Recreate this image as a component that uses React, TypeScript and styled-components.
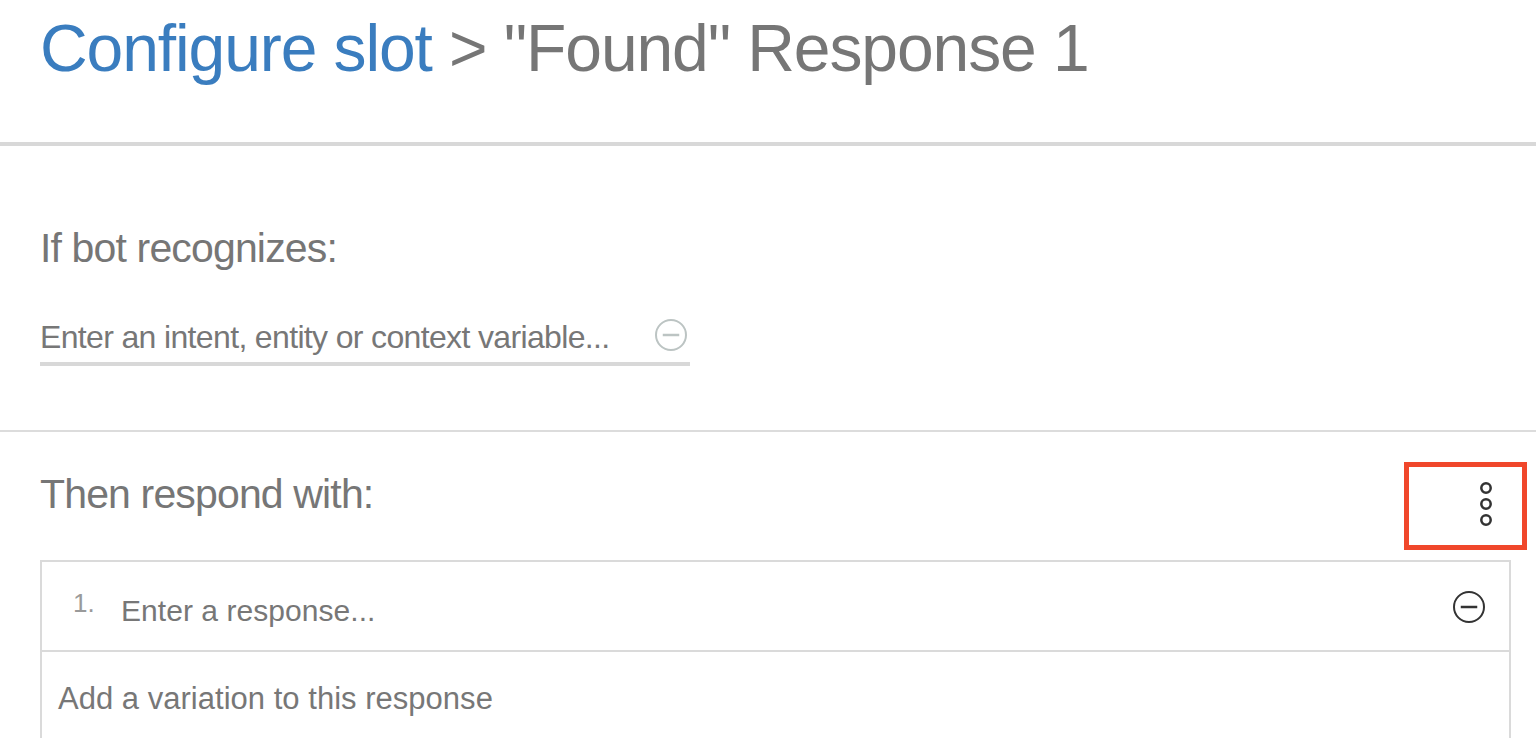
import React from "react";
import styled, { createGlobalStyle } from "styled-components";

const Global = createGlobalStyle`
  html, body { margin: 0; padding: 0; background: #ffffff; }
  body { font-family: "Liberation Sans", Arial, Helvetica, sans-serif; color: #777777; overflow: hidden; }
  * { box-sizing: border-box; }
`;

const Page = styled.div`
  width: 1536px;
  height: 738px;
  overflow: hidden;
  background: #fff;
`;

const Header = styled.header`
  height: 146px;
  padding: 15px 0 0 40px;
  border-bottom: 4px solid #d8d8d8;
`;

const Title = styled.h1`
  margin: 0;
  font-size: 66px;
  line-height: 66px;
  font-weight: 400;
  letter-spacing: -1.1px;
  color: #767676;
  white-space: nowrap;
`;

const Crumb = styled.span`
  color: #3a7dbf;
`;

const Section = styled.section<{ $top: number; $bottom: number; $divider?: boolean }>`
  padding: ${(p) => p.$top}px 0 ${(p) => p.$bottom}px 40px;
  border-top: ${(p) => (p.$divider ? "2px solid #dcdcdc" : "none")};
`;

const Label = styled.h2`
  margin: 0;
  font-size: 41px;
  line-height: 48px;
  font-weight: 400;
  letter-spacing: -0.85px;
  color: #767676;
`;

const ConditionInput = styled.div`
  margin-top: 45px;
  width: 650px;
  height: 49px;
  display: flex;
  align-items: flex-start;
  justify-content: space-between;
  padding-right: 2px;
  border-bottom: 4px solid #d8d8d8;
`;

const Placeholder = styled.span<{ $size: number; $spacing: number }>`
  font-size: ${(p) => p.$size}px;
  line-height: 40px;
  letter-spacing: ${(p) => p.$spacing}px;
  color: #777777;
  white-space: nowrap;
`;

const IconWrap = styled.span<{ $top: number }>`
  display: inline-flex;
  margin-top: ${(p) => p.$top}px;
  flex: none;
`;

const RespondHeader = styled.div`
  display: flex;
  align-items: flex-start;
  justify-content: space-between;
  padding-right: 9px;
`;

const RespondLabel = styled(Label)`
  margin-top: 38px;
`;

const KebabButton = styled.button`
  margin-top: 30px;
  width: 123px;
  height: 88px;
  background: #fff;
  border: 5px solid #f0472b;
  display: flex;
  align-items: center;
  justify-content: flex-end;
  padding: 0 29px 4px 0;
  cursor: pointer;
`;

const ResponseBox = styled.div`
  margin: 10px 25px 0 0;
  border: 2px solid #dadada;
  border-bottom: none;
`;

const ResponseRow = styled.div`
  height: 90px;
  display: flex;
  align-items: flex-start;
  padding: 0 23px 0 31px;
  border-bottom: 2px solid #dadada;
`;

const Index = styled.span`
  margin-top: 26px;
  width: 48px;
  font-size: 26px;
  line-height: 30px;
  color: #9a9a9a;
  flex: none;
`;

const ResponseText = styled.span`
  margin-top: 29px;
  flex: 1;
  font-size: 30px;
  line-height: 40px;
  letter-spacing: 0.05px;
  color: #777777;
  white-space: nowrap;
`;

const VariationRow = styled.div`
  padding: 27px 0 40px 16px;
  font-size: 31px;
  line-height: 40px;
  letter-spacing: 0.02px;
  color: #777777;
`;

const MinusCircle = ({ color, r, stroke }: { color: string; r: number; stroke: number }) => {
  const s = r * 2 + 4;
  const c = s / 2;
  return (
    <svg width={s} height={s} viewBox={`0 0 ${s} ${s}`} fill="none">
      <circle cx={c} cy={c} r={r} stroke={color} strokeWidth={stroke} />
      <line x1={c - r * 0.55} y1={c} x2={c + r * 0.55} y2={c} stroke={color} strokeWidth={stroke + 0.5} />
    </svg>
  );
};

const KebabIcon = () => (
  <svg width="14" height="44" viewBox="0 0 14 44" fill="none">
    <circle cx="7" cy="6" r="4.7" stroke="#333" strokeWidth="2.5" />
    <circle cx="7" cy="22" r="4.7" stroke="#333" strokeWidth="2.5" />
    <circle cx="7" cy="38" r="4.7" stroke="#333" strokeWidth="2.5" />
  </svg>
);

export default function App() {
  return (
    <Page>
      <Global />
      <Header>
        <Title>
          <Crumb>Configure slot</Crumb> &gt; "Found" Response 1
        </Title>
      </Header>
      <Section $top={78} $bottom={64}>
        <Label>If bot recognizes:</Label>
        <ConditionInput>
          <Placeholder $size={32} $spacing={-0.65}>
            Enter an intent, entity or context variable...
          </Placeholder>
          <IconWrap $top={1}>
            <MinusCircle color="#bcc4c3" r={15} stroke={2} />
          </IconWrap>
        </ConditionInput>
      </Section>
      <Section $top={0} $bottom={0} $divider>
        <RespondHeader>
          <RespondLabel>Then respond with:</RespondLabel>
          <KebabButton aria-label="More options">
            <KebabIcon />
          </KebabButton>
        </RespondHeader>
        <ResponseBox>
          <ResponseRow>
            <Index>1.</Index>
            <ResponseText>Enter a response...</ResponseText>
            <IconWrap $top={28}>
              <MinusCircle color="#333333" r={15} stroke={2} />
            </IconWrap>
          </ResponseRow>
          <VariationRow>Add a variation to this response</VariationRow>
        </ResponseBox>
      </Section>
    </Page>
  );
}
